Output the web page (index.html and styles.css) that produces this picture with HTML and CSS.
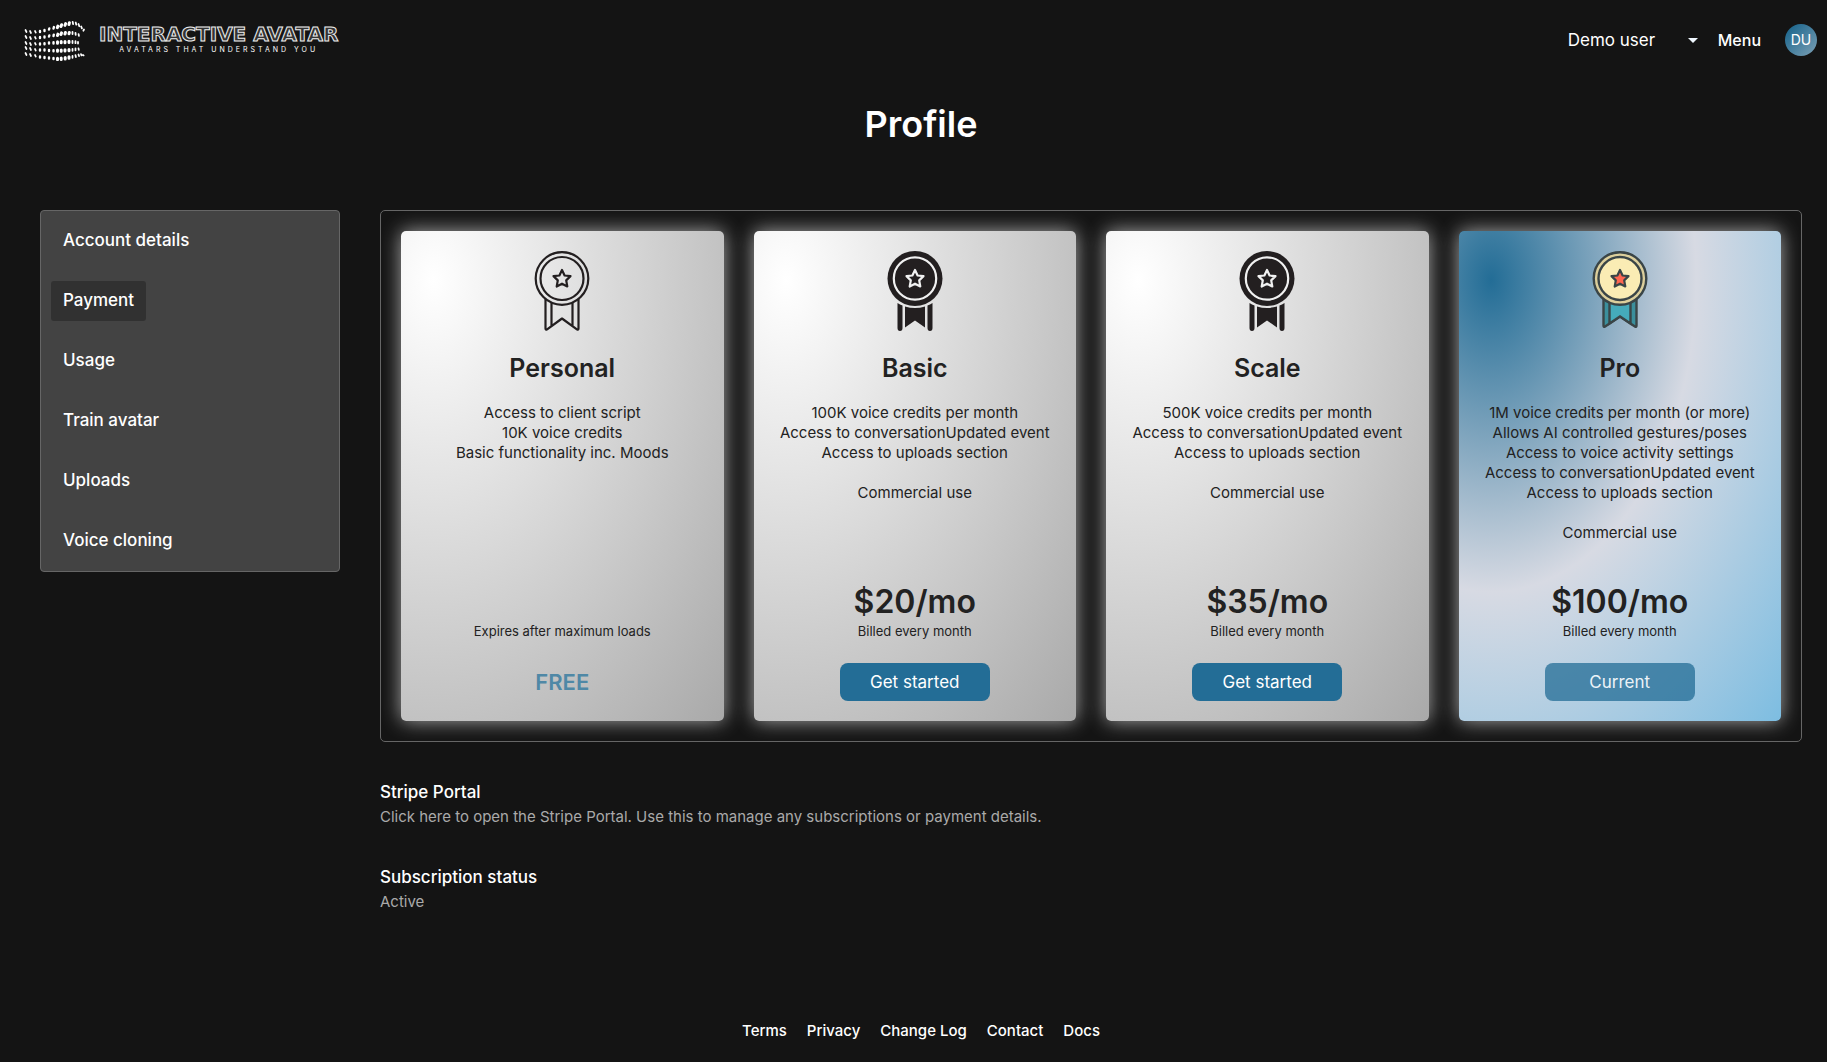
FILE: index.html
```html
<!DOCTYPE html>
<html lang="en">
<head>
    <meta charset="UTF-8">
    <meta name="viewport" content="width=device-width, initial-scale=1.0">
    <title>Interactive Avatar - Profile</title>
    <link rel="stylesheet" href="styles.css">
</head>
<body>
    <!-- shared star shape for the medals -->
    <svg class="defs" aria-hidden="true">
        <symbol id="star" viewBox="-12 -12 24 24">
            <path d="M0-8.5 2.6-3 8.5-2.4 4.2 1.9 5.3 8 0 5.2-5.3 8-4.2 1.9-8.5-2.4-2.6-3Z" stroke-width="2.2" stroke-linejoin="round" />
        </symbol>
    </svg>

    <header class="header">
        <a class="logo" href="#">
            <svg class="logo-mark" viewBox="24 18 62 42" fill="none" stroke="#fff" stroke-linecap="round" aria-hidden="true">
                <g stroke-width="1.7">
                    <path d="M25.5 29l1 2M30 30l1 2M35 30l.8 1.6M25.5 35l1 2M30 36l1 2M35 36l.8 1.6M25.5 41l1 2M30 42l1 2M35 42l.8 1.6M25.5 46l1 2M30 47l1 2M35 48l.8 1.6M25.5 52l1 2M30 53l1 2M35 54l.8 1.6" />
                </g>
                <g stroke-width="2.4">
                    <path d="M40 30v1M44.5 29v1M49 28.5l.3-1M53.5 27.5l.4-1.4M40 36v1M44.5 35.5v1M49 35.5l.3-1M53.5 35l.3-1.4M40 42.5v1M44.5 42.2v1M49 42.5v-1M53.5 42.5v-1.2M40 48.5v1M44.5 48.5v1M49 49v1M53.5 49.2v1M40 55.5v1M44.5 56v1M49 56.5v1M53.5 57v1" />
                </g>
                <g stroke-width="3">
                    <path d="M57.3 26.7l.6-1.6M61 25.5l.6-1.8M65 24.4l.6-1.8M69 23.5l.4-1.8M57.5 34.5l.4-1.4M61 33.5l.5-1.6M65 33l.4-1.5M69 32.8l.3-1.4M57.5 42.2v-1.4M61.2 41.8v-1.4M65 41.8v-1.4M69 41.6v-1.4M57.5 49v1.2M61.2 49v1.2M65 48.8v1.2M69 48.5v1.2M57.5 57.3v1.4M61.2 57v1.4M65.2 56.5v1.4M69 55.8v1.4" />
                </g>
                <g stroke-width="1.8">
                    <path d="M72.7 21l.4 2.2M75.7 21.5l.6 2.2M78.5 23l.8 2.2M81.2 25.5l.7 1.8M84 28.5l-.6 1.2M72.5 31v2M75.5 31.8l.2 2M78.6 33.2l.3 1.6M72.5 40v2M75.5 40.2v2M78 41v1.6M72.5 47.8v2M75.5 47.5v1.8M78.5 47.5l.3 1.4M72.5 55v1.8M75.5 54.2l.4 1.8M78.5 53.5l.5 1.6M81 53.2l.5 1.2M83 54l.6.4" />
                </g>
            </svg>
            <span class="logo-text">
                <span class="logo-name">INTERACTIVE AVATAR</span>
                <span class="logo-tagline">AVATARS THAT UNDERSTAND YOU</span>
            </span>
        </a>
        <div class="header-right">
            <div class="user-select">
                <select aria-label="User">
                    <option>Demo user</option>
                </select>
                <svg class="caret" viewBox="0 0 10 5" fill="aliceblue" aria-hidden="true"><path d="M0 0h10L5 5z" /></svg>
            </div>
            <button class="menu-button" type="button">Menu</button>
            <span class="avatar">DU</span>
        </div>
    </header>

    <div class="page">
        <h1 class="page-title">Profile</h1>

        <div class="columns">
            <nav class="sidebar">
                <a href="#">Account details</a>
                <a class="active" href="#">Payment</a>
                <a href="#">Usage</a>
                <a href="#">Train avatar</a>
                <a href="#">Uploads</a>
                <a href="#">Voice cloning</a>
            </nav>

            <main class="content">
                <div class="plans">
                    <section class="plan">
                        <svg class="medal" viewBox="0 0 56 80" fill="none" stroke="#231f20" stroke-width="2.2" aria-hidden="true">
                            <circle cx="28" cy="27.5" r="26.3" />
                            <circle cx="28" cy="27.5" r="21.5" />
                            <path d="M11.5 48v29.5q0 1.8 1.6.8L28 67.5l14.9 10.8q1.6 1 1.6-.8V48M17.5 52v23M38.5 52v23" stroke-linejoin="round" />
                            <use href="#star" x="16" y="15.5" width="24" height="24" />
                        </svg>
                        <h2>Personal</h2>
                        <p class="features">
                            Access to client script<br>
                            10K voice credits<br>
                            Basic functionality inc. Moods
                        </p>
                        <p class="billing">Expires after maximum loads</p>
                        <div class="free">FREE</div>
                    </section>

                    <section class="plan">
                        <svg class="medal" viewBox="0 0 56 80" fill="#231f20" aria-hidden="true">
                            <circle cx="28" cy="27.5" r="27.5" />
                            <circle cx="28" cy="27.5" r="21.2" fill="none" stroke="#f1f1f1" stroke-width="2.2" />
                            <path d="M10.5 52q2.5 1.5 5 2.5V77q0 3-2.5 3t-2.5-3zM45.5 52q-2.5 1.5-5 2.5V77q0 3 2.5 3t2.5-3zM18 55.5q10 3 20 0v21L28 69.5l-10 7z" />
                            <use href="#star" x="16" y="15.5" width="24" height="24" stroke="#f1f1f1" />
                        </svg>
                        <h2>Basic</h2>
                        <p class="features">
                            100K voice credits per month<br>
                            Access to conversationUpdated event<br>
                            Access to uploads section<br>
                            <br>
                            Commercial use
                        </p>
                        <div class="price">$20/mo</div>
                        <p class="billing">Billed every month</p>
                        <button class="plan-button" type="button">Get started</button>
                    </section>

                    <section class="plan">
                        <svg class="medal" viewBox="0 0 56 80" fill="#231f20" aria-hidden="true">
                            <circle cx="28" cy="27.5" r="27.5" />
                            <circle cx="28" cy="27.5" r="21.2" fill="none" stroke="#f1f1f1" stroke-width="2.2" />
                            <path d="M10.5 52q2.5 1.5 5 2.5V77q0 3-2.5 3t-2.5-3zM45.5 52q-2.5 1.5-5 2.5V77q0 3 2.5 3t2.5-3zM18 55.5q10 3 20 0v21L28 69.5l-10 7z" />
                            <use href="#star" x="16" y="15.5" width="24" height="24" stroke="#f1f1f1" />
                        </svg>
                        <h2>Scale</h2>
                        <p class="features">
                            500K voice credits per month<br>
                            Access to conversationUpdated event<br>
                            Access to uploads section<br>
                            <br>
                            Commercial use
                        </p>
                        <div class="price">$35/mo</div>
                        <p class="billing">Billed every month</p>
                        <button class="plan-button" type="button">Get started</button>
                    </section>

                    <section class="plan plan-pro">
                        <svg class="medal" viewBox="0 0 56 80" stroke="#3a4547" stroke-width="2.4" aria-hidden="true">
                            <path d="M11.5 46v28.5q0 2 1.6 1L28 65.5l14.9 10q1.6 1 1.6-1V46z" fill="#3b8f9c" stroke-linejoin="round" />
                            <path d="M17.5 46v26.5L28 65.5l10.5 7V46z" fill="#45abbb" />
                            <circle cx="28" cy="27.5" r="26.3" fill="#dccf9c" />
                            <circle cx="28" cy="27.5" r="21.5" fill="#faecb4" />
                            <use href="#star" x="16" y="15.5" width="24" height="24" fill="#ff6650" />
                        </svg>
                        <h2>Pro</h2>
                        <p class="features">
                            1M voice credits per month (or more)<br>
                            Allows AI controlled gestures/poses<br>
                            Access to voice activity settings<br>
                            Access to conversationUpdated event<br>
                            Access to uploads section<br>
                            <br>
                            Commercial use
                        </p>
                        <div class="price">$100/mo</div>
                        <p class="billing">Billed every month</p>
                        <button class="plan-button" type="button" disabled>Current</button>
                    </section>
                </div>

                <div class="info">
                    <h3>Stripe Portal</h3>
                    <a href="#">Click here to open the Stripe Portal. Use this to manage any subscriptions or payment details.</a>
                </div>
                <div class="info">
                    <h3>Subscription status</h3>
                    <p>Active</p>
                </div>
            </main>
        </div>

        <footer class="footer">
            <a href="#">Terms</a>
            <a href="#">Privacy</a>
            <a href="#">Change Log</a>
            <a href="#">Contact</a>
            <a href="#">Docs</a>
        </footer>
    </div>
</body>
</html>
```
FILE: styles.css
```css
* {
    box-sizing: border-box;
}

body {
    margin: 0;
    min-height: 100vh;
    display: flex;
    flex-direction: column;
    background-color: #141414;
    color: #fff;
    font-family: Inter, "Liberation Sans", sans-serif;
    font-size: 17px;
    line-height: 24px;
}

h1, h2, h3, p {
    margin: 0;
}

a {
    color: inherit;
    text-decoration: none;
}

button, select {
    font: inherit;
    color: inherit;
    background: none;
    border: none;
    padding: 0;
    cursor: pointer;
}

.defs {
    display: none;
}

/* Header */
.header {
    height: 80px;
    padding: 0 10px 0 24px;
    display: flex;
    align-items: center;
    justify-content: space-between;
}

.logo {
    display: flex;
    align-items: center;
    gap: 13px;
}

.logo-mark {
    width: 62px;
    height: 42px;
}

.logo-text {
    display: flex;
    flex-direction: column;
    align-items: center;
}

.logo-name {
    font-family: "DejaVu Sans", sans-serif;
    font-size: 20px;
    font-weight: bold;
    line-height: 20px;
    color: #333;
    -webkit-text-stroke: 1px #eee;
}

.logo-tagline {
    font-size: 7px;
    line-height: 12px;
    letter-spacing: 3px;
}

.header-right {
    display: flex;
    align-items: center;
}

.user-select {
    position: relative;
    width: 130px;
    margin-right: 20px;
}

.user-select select {
    width: 100%;
    height: 32px;
    appearance: none;
}

.user-select option {
    color: #141414;
}

.caret {
    position: absolute;
    right: 0;
    top: 14px;
    width: 10px;
    height: 5px;
    pointer-events: none;
}

.menu-button {
    font-size: 16px;
    font-weight: 500;
    margin-right: 24px;
}

.avatar {
    width: 32px;
    height: 32px;
    border-radius: 50%;
    background: linear-gradient(135deg, #1d678e 10%, #7199b0 90%);
    display: flex;
    align-items: center;
    justify-content: center;
    font-size: 14px;
}

/* Page */
.page {
    flex: 1;
    display: flex;
    flex-direction: column;
    padding: 20px 25px 19px 40px;
}

.page-title {
    font-size: 36px;
    line-height: 48px;
    font-weight: 600;
    text-align: center;
    margin-bottom: 62px;
}

.columns {
    display: flex;
    align-items: flex-start;
    gap: 40px;
}

.sidebar {
    flex: 0 0 300px;
    display: flex;
    flex-direction: column;
    align-items: flex-start;
    gap: 20px;
    padding: 10px;
    background-color: #434343;
    border: 1px solid #666;
    border-radius: 4px;
}

.sidebar a {
    padding: 7px 12px 9px;
    border-radius: 3px;
    font-weight: 500;
}

.sidebar a.active {
    background-color: #313131;
}

.content {
    flex: 1;
}

/* Plans */
.plans {
    display: grid;
    grid-template-columns: repeat(4, 1fr);
    gap: 30px;
    padding: 20px;
    border: 1px solid #666;
    border-radius: 5px;
    margin-bottom: 38px;
}

.plan {
    min-height: 490px;
    display: flex;
    flex-direction: column;
    align-items: center;
    padding: 20px;
    border-radius: 5px;
    background: radial-gradient(at 10% 10%, #fff, #a9a9a9);
    box-shadow: 0 0 20px #aaa;
    color: #222;
    text-align: center;
}

.plan-pro {
    background: radial-gradient(at 10% 10%, #236d96, #d7dae3 50%, #7dbde1);
}

.medal {
    width: 56px;
    height: 80px;
}

.plan h2 {
    font-size: 25px;
    line-height: 36px;
    font-weight: 600;
    margin: 19px 0 17px;
}

.features {
    font-size: 15px;
    line-height: 20px;
    white-space: nowrap;
    margin-bottom: auto;
}

.price {
    font-size: 32px;
    line-height: 40px;
    font-weight: 600;
}

.billing {
    font-size: 13px;
    line-height: 18px;
    margin-bottom: 23px;
}

.plan-button {
    width: 150px;
    height: 38px;
    border-radius: 8px;
    background-color: #236d96;
    color: #fff;
}

.plan-button:disabled {
    opacity: 0.75;
    cursor: default;
}

.free {
    font-size: 22px;
    line-height: 38px;
    font-weight: 600;
    color: #4f88a6;
}

/* Account info */
.info {
    margin-bottom: 36px;
}

.info h3 {
    font-size: 17px;
    line-height: 24px;
    font-weight: 500;
}

.info a,
.info p {
    display: block;
    font-size: 15px;
    line-height: 25px;
    color: #aaa;
}

/* Footer */
.footer {
    margin-top: auto;
    display: flex;
    justify-content: center;
    gap: 20px;
    font-size: 15px;
    font-weight: 500;
}
```
